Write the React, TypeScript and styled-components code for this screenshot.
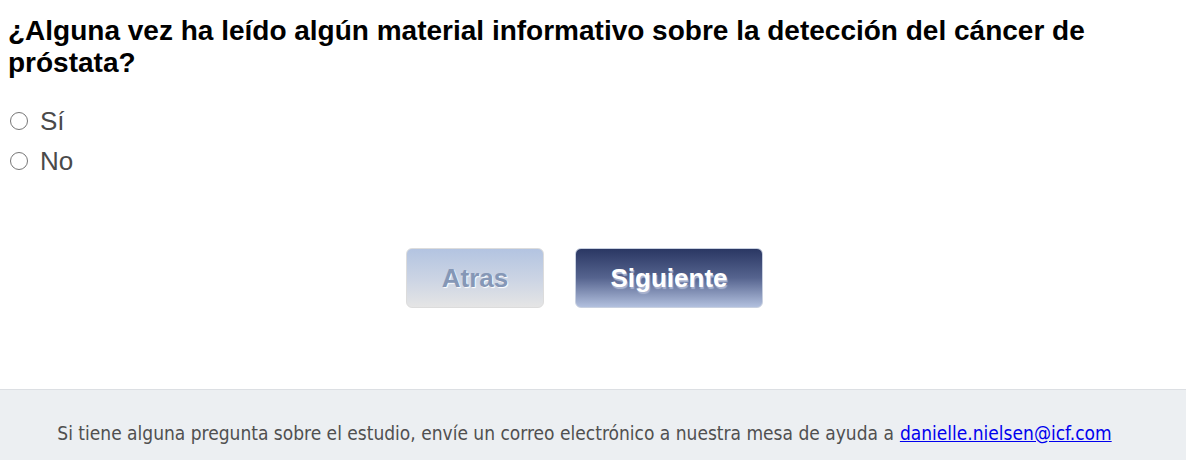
import React, { useState } from 'react';
import styled, { createGlobalStyle } from 'styled-components';

const GlobalStyle = createGlobalStyle`
  html, body {
    margin: 0;
    padding: 0;
    background: #ffffff;
  }
  body {
    font-family: 'Liberation Sans', Arial, sans-serif;
  }
`;

const Page = styled.div`
  width: 100%;
  min-height: 460px;
  display: flex;
  flex-direction: column;
`;

const Survey = styled.div`
  width: 1169px;
  padding: 15px 8px 0 8px;
  height: 389px;
  box-sizing: border-box;
`;

const Question = styled.h1`
  margin: 0;
  font-size: 28px;
  line-height: 32px;
  font-weight: 700;
  color: #000;
`;

const Options = styled.div`
  margin-top: 28px;
  display: flex;
  flex-direction: column;
  gap: 12px;
`;

const Option = styled.label`
  display: flex;
  align-items: center;
  gap: 12px;
  height: 28px;
  font-size: 26px;
  color: #4a4a4a;
  cursor: pointer;
`;

const Radio = styled.input`
  appearance: none;
  margin: 0 0 0 2px;
  width: 18px;
  height: 18px;
  border: 1px solid #767676;
  border-radius: 50%;
  background: #fff;

  &:checked {
    box-shadow: inset 0 0 0 3px #fff;
    background: #2c3a66;
  }
`;

const Buttons = styled.div`
  margin-top: 73px;
  display: flex;
  justify-content: center;
  gap: 31px;
`;

const NavButton = styled.button<{ $primary?: boolean }>`
  width: ${(p) => (p.$primary ? '188px' : '138px')};
  height: 60px;
  border-radius: 6px;
  border: 1px solid ${(p) => (p.$primary ? '#c8d0e0' : '#dcdcdc')};
  background: ${(p) =>
    p.$primary
      ? 'linear-gradient(to bottom, #2a3763 0%, #56648f 50%, #b2c0de 100%)'
      : 'linear-gradient(to bottom, #b3c4e1 0%, #cdd5e4 55%, #e5e5e5 100%)'};
  color: ${(p) => (p.$primary ? '#ffffff' : '#8597b6')};
  font-family: 'Liberation Sans', Arial, sans-serif;
  font-weight: 700;
  font-size: 26px;
  text-shadow: ${(p) => (p.$primary ? '1px 2px 1px #aab4d0' : '1px 1px 1px #ffffff')};
  cursor: ${(p) => (p.$primary ? 'pointer' : 'default')};
  padding: 0;
`;

const Footer = styled.footer`
  flex: 1;
  border-top: 1px solid #dcdfe3;
  background: #eceff2;
  min-height: 71px;
  display: flex;
  align-items: center;
  justify-content: center;
  padding: 16px 17px 0 0;
  box-sizing: border-box;
  font-family: 'DejaVu Sans Condensed', Tahoma, sans-serif;
  font-size: 19px;
  color: #505050;
`;

const Mail = styled.a`
  color: #0000ee;
  margin-left: 6px;
`;

export default function App() {
  const [answer, setAnswer] = useState('');
  return (
    <Page>
      <GlobalStyle />
      <Survey>
        <Question>
          ¿Alguna vez ha leído algún material informativo sobre la detección del cáncer de próstata?
        </Question>
        <Options>
          {['Sí', 'No'].map((o) => (
            <Option key={o}>
              <Radio
                type="radio"
                name="q"
                checked={answer === o}
                onChange={() => setAnswer(o)}
              />
              {o}
            </Option>
          ))}
        </Options>
        <Buttons>
          <NavButton disabled>Atras</NavButton>
          <NavButton $primary>Siguiente</NavButton>
        </Buttons>
      </Survey>
      <Footer>
        Si tiene alguna pregunta sobre el estudio, envíe un correo electrónico a nuestra mesa de ayuda a
        <Mail href="mailto:danielle.nielsen@icf.com">danielle.nielsen@icf.com</Mail>
      </Footer>
    </Page>
  );
}
